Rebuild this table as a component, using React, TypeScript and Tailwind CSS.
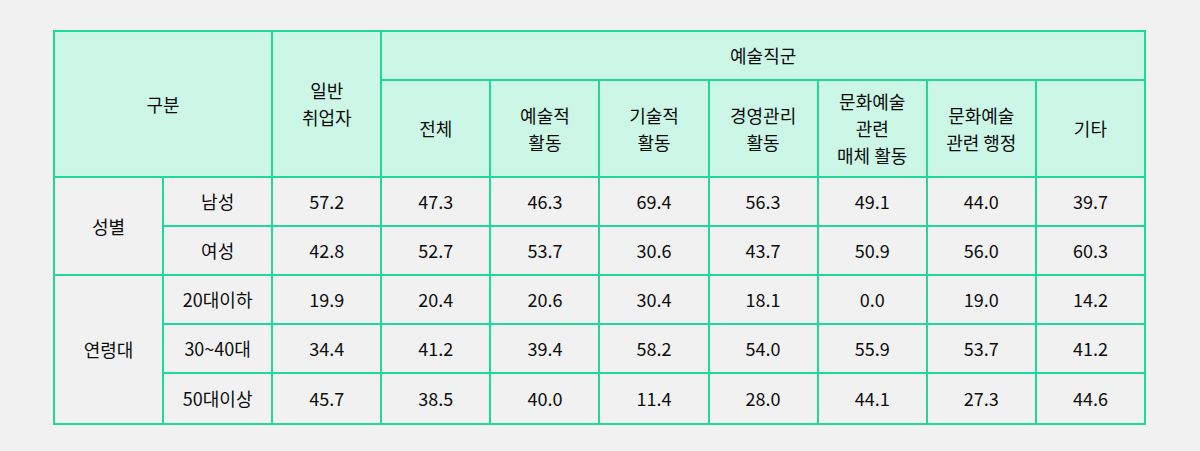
import React from "react";

const rows: { group?: string; span?: number; label: string; vals: string[]; h: string }[] = [
  { group: "성별", span: 2, label: "남성", vals: ["57.2", "47.3", "46.3", "69.4", "56.3", "49.1", "44.0", "39.7"], h: "h-[49px]" },
  { label: "여성", vals: ["42.8", "52.7", "53.7", "30.6", "43.7", "50.9", "56.0", "60.3"], h: "h-[49px]" },
  { group: "연령대", span: 3, label: "20대이하", vals: ["19.9", "20.4", "20.6", "30.4", "18.1", "0.0", "19.0", "14.2"], h: "h-[49px]" },
  { label: "30~40대", vals: ["34.4", "41.2", "39.4", "58.2", "54.0", "55.9", "53.7", "41.2"], h: "h-[49px]" },
  { label: "50대이상", vals: ["45.7", "38.5", "40.0", "11.4", "28.0", "44.1", "27.3", "44.6"], h: "h-[51px]" },
];

const sub = [
  ["전체"],
  ["예술적", "활동"],
  ["기술적", "활동"],
  ["경영관리", "활동"],
  ["문화예술", "관련", "매체 활동"],
  ["문화예술", "관련 행정"],
  ["기타"],
];

const td = "border-2 border-[#1fd998] text-center align-middle p-0";
const th = "border-2 border-[#1fd998] text-center align-middle p-0 font-normal bg-[#ccf6e6]";

export default function App() {
  return (
    <div
      className="w-[1200px] h-[451px] bg-[#f1f1f1] pt-[30px] pl-[53px] text-[18px] font-normal text-[#0d0d0d] leading-[27px]"
      style={{ fontFamily: '"Noto Sans CJK KR", "Noto Sans", sans-serif' }}
    >
      <table className="table-fixed border-collapse w-[1093px]">
        <colgroup>
          {Array.from({ length: 10 }).map((_, i) => (
            <col key={i} className="w-[109.1px]" />
          ))}
        </colgroup>
        <thead>
          <tr className="h-[49px]">
            <th rowSpan={2} colSpan={2} className={th}>구분</th>
            <th rowSpan={2} className={th}>
              일반
              <br />
              취업자
            </th>
            <th colSpan={7} className={th}>예술직군</th>
          </tr>
          <tr className="h-[97px]">
            {sub.map((lines, i) => (
              <th key={i} className={th}>
                {lines.map((l, j) => (
                  <React.Fragment key={j}>
                    {j > 0 && <br />}
                    {l}
                  </React.Fragment>
                ))}
              </th>
            ))}
          </tr>
        </thead>
        <tbody>
          {rows.map((r, i) => (
            <tr key={i} className={r.h}>
              {r.group && (
                <td rowSpan={r.span} className={td}>
                  {r.group}
                </td>
              )}
              <td className={td}>{r.label}</td>
              {r.vals.map((v, j) => (
                <td key={j} className={td}>
                  {v}
                </td>
              ))}
            </tr>
          ))}
        </tbody>
      </table>
    </div>
  );
}
